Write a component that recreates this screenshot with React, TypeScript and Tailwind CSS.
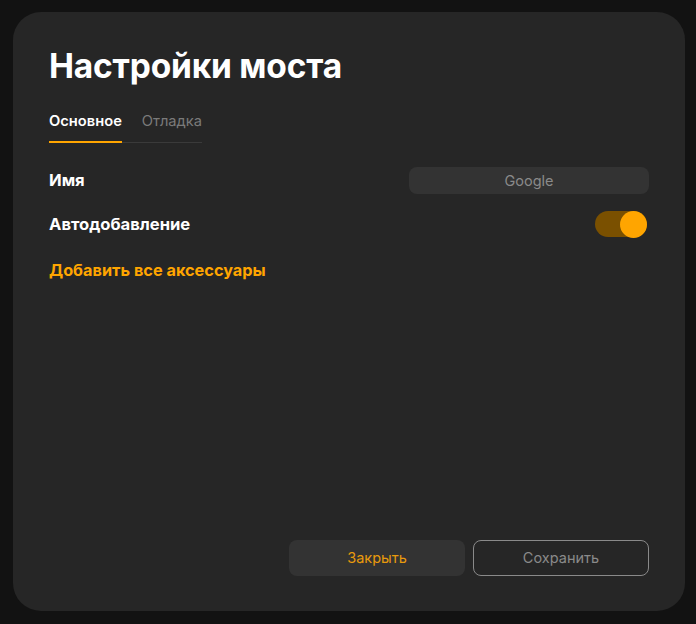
import React, { useState } from 'react';

export default function App() {
  const [tab, setTab] = useState<'main' | 'debug'>('main');
  const [autoAdd, setAutoAdd] = useState(true);

  return (
    <div
      className="w-[696px] h-[624px] bg-[#121212] pl-[13px] pr-[11px] pt-[12px] pb-[13px] flex"
      style={{ fontFamily: 'Inter, "Noto Sans", sans-serif' }}
    >
      <div className="flex-1 bg-[#262626] rounded-[28px] px-[36px] pt-[34px] pb-[35px] flex flex-col">
        <h1 className="text-[33.5px] leading-[40px] font-bold text-white tracking-[-0.2px]">Настройки моста</h1>

        <div className="flex mt-[25px] w-[153px] border-b border-[#3a3a3a]">
          <button
            onClick={() => setTab('main')}
            className={`text-[14.7px] leading-[20px] pb-[10px] font-semibold border-b-2 -mb-px ${
              tab === 'main' ? 'text-white border-[#ffa500]' : 'text-[#7a7a7a] border-transparent'
            }`}
          >
            Основное
          </button>
          <button
            onClick={() => setTab('debug')}
            className={`ml-[20px] text-[14.7px] leading-[20px] pb-[10px] border-b-2 -mb-px ${
              tab === 'debug' ? 'text-white border-[#ffa500] font-semibold' : 'text-[#7a7a7a] border-transparent'
            }`}
          >
            Отладка
          </button>
        </div>

        <div className="flex items-center justify-between mt-[24px]">
          <span className="text-[16.6px] font-bold text-white">Имя</span>
          <div className="w-[240px] h-[27px] rounded-[8px] bg-[#333333] flex items-center justify-center text-[14.5px] text-[#8a8a8a]">
            Google
          </div>
        </div>

        <div className="flex items-center justify-between mt-[17px]">
          <span className="text-[16.6px] font-bold text-white">Автодобавление</span>
          <button
            onClick={() => setAutoAdd(!autoAdd)}
            className={`mr-[2px] w-[52px] h-[26px] rounded-full flex items-center ${
              autoAdd ? 'bg-[#7a5000] justify-end' : 'bg-[#444] justify-start'
            }`}
          >
            <span className={`w-[27px] h-[27px] rounded-full ${autoAdd ? 'bg-[#ffa500]' : 'bg-[#888]'}`} />
          </button>
        </div>

        <button className="self-start mt-[21px] text-[16.3px] font-bold text-[#ffa500]">Добавить все аксессуары</button>

        <div className="mt-auto flex justify-end gap-[8px]">
          <button className="w-[176px] h-[36px] rounded-[8px] bg-[#333333] text-[14.5px] text-[#e89a0c]">Закрыть</button>
          <button className="w-[176px] h-[36px] rounded-[8px] border border-[#8a8a8a] text-[14.5px] text-[#8a8a8a]">
            Сохранить
          </button>
        </div>
      </div>
    </div>
  );
}
